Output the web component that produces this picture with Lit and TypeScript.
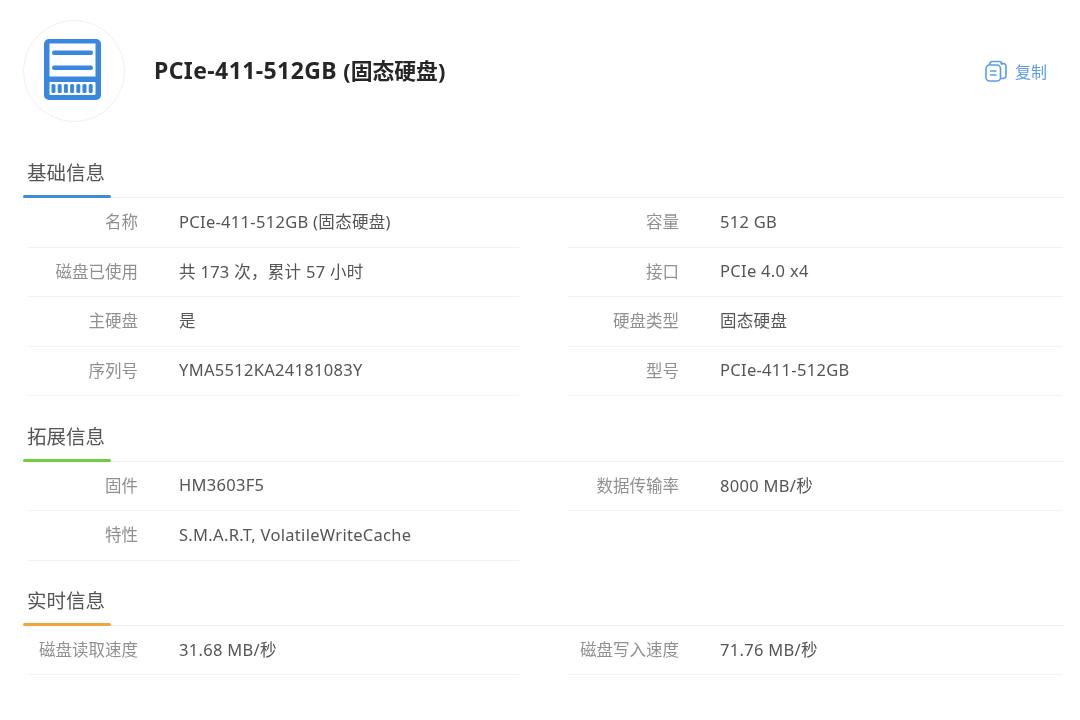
import { LitElement, html, css, svg } from "lit";
import { customElement } from "lit/decorators.js";

type Row = [string, string];
interface Section { title: string; color: string; rows: Row[] }

const sections: Section[] = [
  {
    title: "基础信息",
    color: "#3f8bdc",
    rows: [
      ["名称", "PCIe-411-512GB (固态硬盘)"],
      ["容量", "512 GB"],
      ["磁盘已使用", "共 173 次，累计 57 小时"],
      ["接口", "PCIe 4.0 x4"],
      ["主硬盘", "是"],
      ["硬盘类型", "固态硬盘"],
      ["序列号", "YMA5512KA24181083Y"],
      ["型号", "PCIe-411-512GB"],
    ],
  },
  {
    title: "拓展信息",
    color: "#6fce3f",
    rows: [
      ["固件", "HM3603F5"],
      ["数据传输率", "8000 MB/秒"],
      ["特性", "S.M.A.R.T, VolatileWriteCache"],
    ],
  },
  {
    title: "实时信息",
    color: "#f2a53c",
    rows: [
      ["磁盘读取速度", "31.68 MB/秒"],
      ["磁盘写入速度", "71.76 MB/秒"],
    ],
  },
];

@customElement("app-root")
export class AppRoot extends LitElement {
  static styles = css`
    :host {
      display: block;
      width: 1080px;
      height: 720px;
      background: #fff;
      overflow: hidden;
      font-family: "Noto Sans", "Noto Sans CJK SC", sans-serif;
    }
    .page {
      padding: 20px 15px 0 23px;
      filter: blur(0.55px);
    }
    .head {
      display: flex;
      align-items: center;
      height: 102px;
    }
    .logo {
      width: 102px;
      height: 102px;
      box-sizing: border-box;
      border: 1.5px solid #efefef;
      border-radius: 50%;
      display: flex;
      align-items: center;
      justify-content: center;
      padding: 0 3px 3px 0;
      flex: none;
    }
    .name {
      margin-left: 29px;
      font-size: 23px;
      letter-spacing: 0.4px;
      font-weight: 700;
      color: #262626;
      flex: 1;
      padding-bottom: 2px;
    }
    .name .cjk {
      font-size: 21.8px;
      letter-spacing: 0;
    }
    .copy {
      display: flex;
      align-items: center;
      gap: 8px;
      margin-right: 18px;
      color: #5b9cf0;
      font-size: 16px;
    }
    .sec-title {
      height: 51px;
      box-sizing: border-box;
      padding: 0 0 12px 4px;
      border-bottom: 1px solid #f0f0f0;
      font-size: 19.5px;
      line-height: 24px;
      color: #555;
      position: relative;
      display: flex;
      align-items: flex-end;
    }
    .sec-title::after {
      content: "";
      position: absolute;
      left: 0;
      bottom: -1px;
      width: 88px;
      height: 3px;
      border-radius: 2px;
      background: var(--accent);
    }
    .first { margin-top: 25px; }
    .sec { margin-top: 14.5px; }
    .sec:last-child .row { height: 49px; }
    .grid {
      display: grid;
      grid-template-columns: 492px 494px;
      column-gap: 49px;
      margin-left: 4px;
    }
    .row {
      height: 49.5px;
      box-sizing: border-box;
      border-bottom: 1px solid #f2f2f2;
      padding-bottom: 2px;
      display: flex;
      align-items: center;
      font-size: 16.5px;
      letter-spacing: 0.3px;
    }
    .label {
      width: 111px;
      text-align: right;
      color: #909090;
      font-size: 16.5px;
      letter-spacing: 0;
      flex: none;
    }
    .value {
      margin-left: 41px;
      color: #555;
      white-space: nowrap;
    }
  `;

  render() {
    return html`
      <div class="page">
        <div class="head">
          <div class="logo">
            <svg width="57" height="61" viewBox="0 0 57 61">
              <rect x="0" y="0" width="57" height="61" rx="5" fill="#3a87e0" />
              <rect x="5.500" y="4.500" width="46" height="33" fill="#fff" />
              <rect x="5.500" y="43" width="46" height="13" rx="1" fill="#fff" />
              <rect x="8" y="11.500" width="41" height="4.500" rx="2.200" fill="#3a87e0" />
              <rect x="8" y="26.500" width="41" height="4.500" rx="2.200" fill="#3a87e0" />
              ${[0, 1, 2, 3, 4, 5, 6].map(
                (i) => svg`<rect x=${7.5 + i * 6.2} y="45" width="4" height="9" rx="1.5" fill="#3a87e0" />`
              )}
            </svg>
          </div>
          <div class="name">PCIe-411-512GB <span class="cjk">(固态硬盘)</span></div>
          <div class="copy">
            <svg width="22" height="22" viewBox="0 0 22 22" fill="none" stroke="#5b9cf0" stroke-width="1.6">
              <rect x="1" y="5" width="14.500" height="16" rx="3.500" />
              <path d="M4.500 5V4.500a3 3 0 0 1 3-3h6.500a3 3 0 0 1 3 3V5" />
              <path d="M15.500 3.500h2.500a3 3 0 0 1 3 3v9a3 3 0 0 1-3 3h-2.500" />
              <path d="M5 11h6.500M5 15h6.500" />
            </svg>
            <span>复制</span>
          </div>
        </div>
        ${sections.map(
          (s, i) => html`
            <div class=${i === 0 ? "first" : "sec"}>
              <div class="sec-title" style="--accent:${s.color}">${s.title}</div>
              <div class="grid">
                ${s.rows.map(
                  ([k, v]) => html`
                    <div class="row">
                      <span class="label">${k}</span>
                      <span class="value">${v}</span>
                    </div>
                  `
                )}
              </div>
            </div>
          `
        )}
      </div>
    `;
  }
}
